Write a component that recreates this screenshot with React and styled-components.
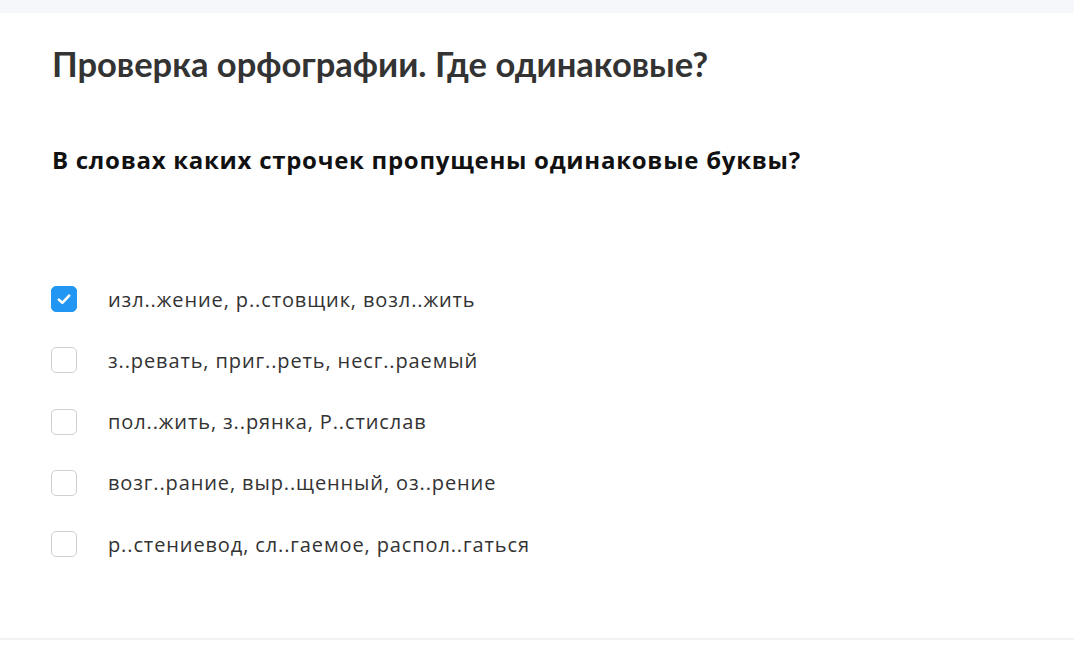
import React, { useState } from "react";
import styled, { createGlobalStyle } from "styled-components";

const Global = createGlobalStyle`
  html, body { margin: 0; padding: 0; background: #ffffff; }
  body { font-family: "Open Sans", "Noto Sans", sans-serif; }
`;

const Page = styled.div`
  width: 1074px;
  height: 661px;
  display: flex;
  flex-direction: column;
  overflow: hidden;
`;

const TopBar = styled.div`
  height: 13px;
  background: #f6f7fb;
  flex-shrink: 0;
`;

const Card = styled.main`
  height: 627px;
  padding: 29px 52px 0 51px;
  box-sizing: border-box;
  border-bottom: 2px solid #f2f2f2;
`;

const Title = styled.h1`
  margin: 0;
  padding-left: 1px;
  font-family: Lato, "Open Sans", sans-serif;
  font-size: 34.5px;
  line-height: 44px;
  font-weight: 700;
  color: #333333;
`;

const Question = styled.h2`
  margin: 58px 0 0;
  padding-left: 1px;
  font-size: 24px;
  letter-spacing: 0.72px;
  line-height: 32px;
  font-weight: 700;
  color: #111111;
`;

const Options = styled.ul`
  list-style: none;
  margin: 110px 0 0;
  padding: 0;
  display: flex;
  flex-direction: column;
  gap: 35.25px;
`;

const Option = styled.li`
  display: flex;
  align-items: center;
  gap: 31px;
  height: 26px;
  cursor: pointer;
`;

const Box = styled.span`
  width: 26px;
  height: 26px;
  box-sizing: border-box;
  border-radius: 5px;
  border: 1px solid ${(p) => (p.$checked ? "#2196f3" : "#cfcfcf")};
  background: ${(p) => (p.$checked ? "#2196f3" : "#ffffff")};
  display: flex;
  align-items: center;
  justify-content: center;
  flex-shrink: 0;
`;

const Label = styled.span`
  font-size: 20px;
  letter-spacing: 0.88px;
  color: #333333;
`;

const items = [
  "изл..жение, р..стовщик, возл..жить",
  "з..ревать, приг..реть, несг..раемый",
  "пол..жить, з..рянка, Р..стислав",
  "возг..рание, выр..щенный, оз..рение",
  "р..стениевод, сл..гаемое, распол..гаться",
];

export default function App() {
  const [checked, setChecked] = useState([true, false, false, false, false]);
  const toggle = (i) =>
    setChecked((c) => c.map((v, j) => (j === i ? !v : v)));

  return (
    <Page>
      <Global />
      <TopBar />
      <Card>
        <Title>Проверка орфографии. Где одинаковые?</Title>
        <Question>В словах каких строчек пропущены одинаковые буквы?</Question>
        <Options>
          {items.map((t, i) => (
            <Option key={i} onClick={() => toggle(i)}>
              <Box $checked={checked[i]}>
                {checked[i] && (
                  <svg width="16" height="16" viewBox="0 0 16 16">
                    <path
                      d="M2.8 8.6 L6.3 11.8 L13.2 4.6"
                      fill="none"
                      stroke="#fff"
                      strokeWidth="2.6"
                      strokeLinecap="round"
                      strokeLinejoin="round"
                    />
                  </svg>
                )}
              </Box>
              <Label>{t}</Label>
            </Option>
          ))}
        </Options>
      </Card>
    </Page>
  );
}
